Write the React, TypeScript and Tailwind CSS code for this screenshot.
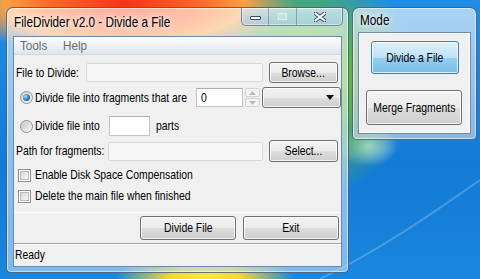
import type { ReactNode } from "react";
import clsx from "clsx";

const font = "font-['Liberation_Sans',Arial,sans-serif]";

// the screenshot's text is narrow, so squeeze it horizontally
function T({ children, center, className }: { children: ReactNode; center?: boolean; className?: string }) {
  return (
    <span
      className={clsx(
        "inline-block whitespace-nowrap",
        center ? "origin-center" : "origin-left",
        className ?? "scale-x-[0.8]"
      )}
    >
      {children}
    </span>
  );
}

function Btn({ className, children, blue }: { className?: string; children: ReactNode; blue?: boolean }) {
  return (
    <div
      className={clsx(
        "flex shrink-0 items-center justify-center rounded-[3px] border text-[13px] text-black shadow-[inset_0_0_0_1px_rgba(255,255,255,0.75)]",
        blue
          ? "border-[#3c7fb1] bg-[linear-gradient(#dcf0fb_0%,#bfe2f7_50%,#95cff1_51%,#78bde9_100%)]"
          : "border-[#707070] bg-[linear-gradient(#f3f3f3_0%,#ebebeb_50%,#dddddd_51%,#cfcfcf_100%)]",
        className
      )}
    >
      {children}
    </div>
  );
}

function Radio({ checked }: { checked?: boolean }) {
  return (
    <div className="flex h-[13px] w-[13px] shrink-0 items-center justify-center rounded-full border border-[#8e8f8f] bg-[linear-gradient(135deg,#cfcfcf,#fbfbfb)]">
      {checked ? (
        <div className="h-[7px] w-[7px] rounded-full bg-[radial-gradient(circle_at_35%_35%,#a8d8f6,#2f72ab_60%,#174a78)]" />
      ) : (
        <div className="h-[9px] w-[9px] rounded-full bg-[linear-gradient(135deg,#c9c9c9,#f4f4f4)]" />
      )}
    </div>
  );
}

function Check() {
  return (
    <div className="flex h-[13px] w-[13px] shrink-0 items-center justify-center border border-[#8e8f8f] bg-white">
      <div className="h-[9px] w-[9px] border border-[#b8bcc0] bg-[linear-gradient(135deg,#d6d6d6,#f9f9f9)]" />
    </div>
  );
}

function Arrow({ up }: { up?: boolean }) {
  return (
    <svg width="7" height="4" viewBox="0 0 7 4">
      <path d={up ? "M0 4 L3.5 0 L7 4 Z" : "M0 0 L7 0 L3.5 4 Z"} fill="#b9b9b9" />
    </svg>
  );
}

export default function App() {
  return (
    <div
      className={clsx(
        "relative h-[279px] w-[480px] overflow-hidden bg-[radial-gradient(170px_55px_at_125px_4px,#ff3014_0%,#ff6a28_45%,#ffa040_70%,transparent_100%),radial-gradient(120px_120px_at_300px_80px,#8fd04a_0%,#5fb83a_40%,transparent_100%),radial-gradient(90px_30px_at_205px_279px,#ffe84a_0%,#f2d63a_40%,transparent_100%),radial-gradient(30px_20px_at_368px_146px,rgba(210,238,255,0.9)_0%,transparent_100%),linear-gradient(180deg,#1f8de6_0%,#137bd6_60%,#1a86dd_100%)]",
        font
      )}
    >
      <svg className="absolute inset-0" width="480" height="279" viewBox="0 0 480 279">
        <path d="M320 279 C 380 250, 430 215, 480 180" stroke="rgba(255,255,255,0.22)" strokeWidth="2" fill="none" />
      </svg>

      {/* main window */}
      <div className="absolute left-[6px] top-[7px] flex h-[266px] w-[343px] flex-col rounded-t-[7px] rounded-b-[5px] border border-[#2a3d55]/70 bg-[linear-gradient(rgba(255,255,255,0.6),rgba(190,222,248,0.6))] px-[6px] pb-[5px] shadow-[inset_0_0_0_1px_rgba(255,255,255,0.55)]">
        <div className="flex h-[28px] items-center pl-px text-[14px] text-black [text-shadow:0_0_6px_white,0_0_10px_white]">
          <T className="scale-x-[0.84]">FileDivider v2.0 - Divide a File</T>
        </div>

        <div className="absolute right-[5px] top-0 flex h-[18px] w-[102px] overflow-hidden rounded-b-[5px] border border-t-0 border-[#3b5069]/60 bg-[linear-gradient(rgba(200,228,250,0.5),rgba(140,195,238,0.5))] shadow-[inset_0_0_0_1px_rgba(255,255,255,0.45)]">
          <div className="flex w-[27px] items-center justify-center border-r border-[#3b5069]/40">
            <div className="mt-[2px] h-[4px] w-[11px] rounded-[1px] border border-[#354a63] bg-white" />
          </div>
          <div className="flex w-[28px] items-center justify-center border-r border-[#3b5069]/40">
            <div className="h-[7px] w-[9px] border border-white/50 bg-white/20" />
          </div>
          <div className="flex flex-1 items-center justify-center">
            <svg width="12" height="10" viewBox="0 0 12 10">
              <path d="M1.5 1.5 L10.5 8.5 M10.5 1.5 L1.5 8.5" stroke="#354a63" strokeWidth="4" strokeLinecap="square" />
              <path d="M1.5 1.5 L10.5 8.5 M10.5 1.5 L1.5 8.5" stroke="white" strokeWidth="2" strokeLinecap="square" />
            </svg>
          </div>
        </div>

        <div className="flex flex-1 flex-col border border-[#6f8aa8] bg-[#f0f0f0] text-[13px] text-black">
          <div className="flex h-[18px] items-center border-b border-[#d2d8e2] bg-[linear-gradient(#fdfdfe,#eef1f7_50%,#dfe5ee)] text-[13px] text-[#6a6a6a]">
            <span className="ml-[6px] w-[43px]"><T className="scale-x-[0.9]">Tools</T></span>
            <span><T className="scale-x-[0.9]">Help</T></span>
          </div>

          <div className="mt-[7px] flex h-[21px] items-center pl-[2px]">
            <span className="w-[70px] shrink-0"><T>File to Divide:</T></span>
            <div className="h-[19px] w-[177px] shrink-0 rounded-[2px] border border-[#d9d9d9] bg-[#f6f6f6]" />
            <Btn className="ml-[6px] h-[21px] w-[69px]"><T center>Browse...</T></Btn>
          </div>

          <div className="mt-[4px] flex h-[21px] items-center pl-[6px]">
            <Radio checked />
            <span className="ml-[2px] w-[161px] shrink-0"><T>Divide file into fragments that are</T></span>
            <div className="flex h-[19px] w-[47px] shrink-0 items-center border border-[#c3c3c3] border-t-[#abadb3] bg-white pl-[4px]"><T>0</T></div>
            <div className="ml-[2px] flex h-[19px] w-[15px] shrink-0 flex-col gap-px">
              <div className="flex flex-1 items-center justify-center rounded-[2px] border border-[#d2d2d2] bg-[#f4f4f4]"><Arrow up /></div>
              <div className="flex flex-1 items-center justify-center rounded-[2px] border border-[#d2d2d2] bg-[#f4f4f4]"><Arrow /></div>
            </div>
            <Btn className="ml-[2px] h-[21px] w-[79px] justify-end pr-[6px]">
              <svg width="8" height="5" viewBox="0 0 8 5"><path d="M0 0 L8 0 L4 5 Z" fill="#111" /></svg>
            </Btn>
          </div>

          <div className="mt-[8px] flex h-[20px] items-center pl-[6px]">
            <Radio />
            <span className="ml-[2px] w-[74px] shrink-0"><T>Divide file into</T></span>
            <div className="h-[20px] w-[41px] shrink-0 border border-[#c3c3c3] border-t-[#abadb3] bg-white" />
            <span className="ml-[6px]"><T>parts</T></span>
          </div>

          <div className="mt-[4px] flex h-[22px] items-center pl-[2px]">
            <span className="w-[92px] shrink-0"><T>Path for fragments:</T></span>
            <div className="h-[19px] w-[155px] shrink-0 rounded-[2px] border border-[#d9d9d9] bg-[#f6f6f6]" />
            <Btn className="ml-[6px] h-[22px] w-[69px]"><T center>Select...</T></Btn>
          </div>

          <div className="mt-[6px] flex h-[14px] items-center pl-[4px]">
            <Check />
            <span className="ml-[4px]"><T>Enable Disk Space Compensation</T></span>
          </div>
          <div className="mt-[7px] flex h-[14px] items-center pl-[4px]">
            <Check />
            <span className="ml-[4px]"><T>Delete the main file when finished</T></span>
          </div>

          <div className="flex-1 border-b border-white" />

          <div className="mt-[3px] flex h-[24px] justify-end gap-[7px] pr-[2px]">
            <Btn className="w-[96px]"><T center>Divide File</T></Btn>
            <Btn className="w-[96px]"><T center>Exit</T></Btn>
          </div>

          <div className="mt-[3px] flex h-[23px] items-center border-t border-[#a5a5a5] pl-px shadow-[inset_0_1px_0_white]">
            <T>Ready</T>
          </div>
        </div>
      </div>

      {/* mode window */}
      <div className="absolute left-[352px] top-[7px] flex h-[133px] w-[125px] flex-col rounded-t-[7px] rounded-b-[5px] border border-[#2a3d55]/70 bg-[linear-gradient(rgba(255,255,255,0.62),rgba(200,215,230,0.65))] px-[5px] pb-[5px] shadow-[inset_0_0_0_1px_rgba(255,255,255,0.55)]">
        <div className="flex h-[24px] items-center pl-[2px] text-[14px] text-black [text-shadow:0_0_6px_white,0_0_10px_white]">
          <T className="scale-x-[0.84]">Mode</T>
        </div>
        <div className="flex flex-1 flex-col border border-[#6f8aa8] bg-[#f0f0f0] shadow-[inset_0_0_0_1px_white]">
          <Btn blue className="ml-[12px] mt-[8px] h-[33px] w-[88px]"><T center>Divide a File</T></Btn>
          <Btn className="ml-[7px] mt-[16px] h-[35px] w-[96px]"><T center>Merge Fragments</T></Btn>
        </div>
      </div>
    </div>
  );
}
